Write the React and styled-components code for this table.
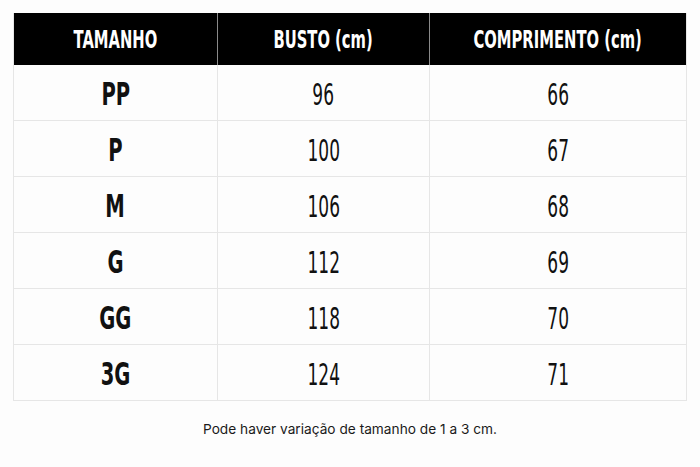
import React from 'react';
import styled, { createGlobalStyle } from 'styled-components';

const GlobalStyle = createGlobalStyle`
  body {
    margin: 0;
    background: #fdfdfd;
  }
`;

const Page = styled.div`
  width: 700px;
  height: 467px;
  padding: 13px 13px 0 13px;
  box-sizing: border-box;
  display: flex;
  flex-direction: column;
`;

const Grid = styled.div`
  display: grid;
  grid-template-columns: 203px 212px 1fr;
  border-left: 1px solid #e6e6e6;
  border-right: 1px solid #e6e6e6;
`;

const HeadCell = styled.div`
  height: 52px;
  background: #000;
  color: #fff;
  display: flex;
  align-items: center;
  justify-content: center;
  border-left: ${ props => ( props.first ? 'none' : '1px solid #8a8a8a' ) };
  font-family: "DejaVu Sans Condensed", "DejaVu Sans", sans-serif;
  font-weight: bold;
  font-size: 24.5px;
`;

const Cell = styled.div`
  height: 56px;
  box-sizing: border-box;
  padding-top: 3px;
  display: flex;
  align-items: center;
  justify-content: center;
  border-bottom: 1px solid #e6e6e6;
  border-left: ${ props => ( props.first ? 'none' : '1px solid #e6e6e6' ) };
  font-family: "DejaVu Sans Condensed", "DejaVu Sans", sans-serif;
  font-weight: ${ props => ( props.first ? 'bold' : 'normal' ) };
  font-size: ${ props => ( props.first ? '31.5px' : '30px' ) };
  color: #111;
`;

const Squeeze = styled.span`
  display: inline-block;
  transform: scaleX(${ props => props.x });
`;

const Note = styled.div`
  margin-top: 20px;
  text-align: center;
  font-family: Inter, "Noto Sans", sans-serif;
  font-size: 13.7px;
  color: #1a1a1a;
`;

const rows = [
  [ 'PP', '96', '66' ],
  [ 'P', '100', '67' ],
  [ 'M', '106', '68' ],
  [ 'G', '112', '69' ],
  [ 'GG', '118', '70' ],
  [ '3G', '124', '71' ],
];

export default function App() {
  return (
    <Page>
      <GlobalStyle />
      <Grid>
        <HeadCell first><Squeeze x={0.67}>TAMANHO</Squeeze></HeadCell>
        <HeadCell><Squeeze x={0.67}>BUSTO (cm)</Squeeze></HeadCell>
        <HeadCell><Squeeze x={0.67}>COMPRIMENTO (cm)</Squeeze></HeadCell>
        {rows.map( row => row.map( ( value, i ) => (
          <Cell key={row[0] + i} first={i === 0}>
            <Squeeze x={i === 0 ? 0.69 : 0.63}>{value}</Squeeze>
          </Cell>
        ) ) )}
      </Grid>
      <Note>Pode haver variação de tamanho de 1 a 3 cm.</Note>
    </Page>
  );
}
